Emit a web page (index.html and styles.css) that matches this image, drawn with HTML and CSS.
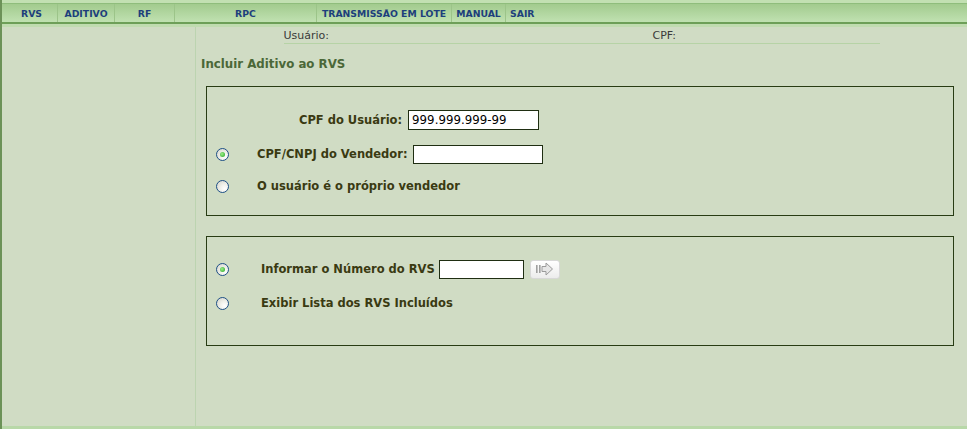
FILE: index.html
```html
<!DOCTYPE html>
<html lang="pt-BR">
<head>
<meta charset="utf-8">
<title>Incluir Aditivo ao RVS</title>
<link rel="stylesheet" href="styles.css">
</head>
<body>
<div class="page">
  <div class="top-strip"></div>
  <nav class="menubar">
    <a class="menu-item w-rvs">RVS</a>
    <a class="menu-item w-aditivo">ADITIVO</a>
    <a class="menu-item w-rf">RF</a>
    <a class="menu-item w-rpc">RPC</a>
    <a class="menu-item w-trans">TRANSMISSÃO EM LOTE</a>
    <a class="menu-item w-manual">MANUAL</a>
    <a class="menu-item w-sair">SAIR</a>
  </nav>
  <div class="under-strip"></div>
  <div class="main">
    <aside class="sidebar"></aside>
    <section class="content">
      <div class="info-row">
        <span class="info-user">Usuário:</span>
        <span class="info-cpf">CPF:</span>
      </div>
      <h1 class="title">Incluir Aditivo ao RVS</h1>

      <div class="box box-one">
        <div class="row row-user">
          <label class="label">CPF do Usuário:</label>
          <input class="field field-user" type="text" value="999.999.999-99">
        </div>
        <div class="row row-radio">
          <input class="radio" type="radio" name="vend" checked>
          <label class="label">CPF/CNPJ do Vendedor:</label>
          <input class="field field-vend" type="text">
        </div>
        <div class="row row-radio">
          <input class="radio" type="radio" name="vend">
          <label class="label">O usuário é o próprio vendedor</label>
        </div>
      </div>

      <div class="box box-two">
        <div class="row row-radio2">
          <input class="radio" type="radio" name="rvs" checked>
          <label class="label">Informar o Número do RVS</label>
          <input class="field field-rvs" type="text">
          <button class="go-btn" type="button" aria-label="Ir">
            <svg width="19" height="14" viewBox="0 0 19 14">
              <rect x="1" y="3" width="1.6" height="8" fill="#a0a0a0"/>
              <rect x="4" y="3" width="1.6" height="8" fill="#a0a0a0"/>
              <path d="M7 4.5 H11 V1 L17.5 7 L11 13 V9.5 H7 Z" fill="#e6e6e6" stroke="#9a9a9a" stroke-width="1"/>
            </svg>
          </button>
        </div>
        <div class="row row-radio2">
          <input class="radio" type="radio" name="rvs">
          <label class="label">Exibir Lista dos RVS Incluídos</label>
        </div>
      </div>
    </section>
  </div>
  <div class="bottom-strip"></div>
</div>
</body>
</html>
```

FILE: styles.css
```css
html, body {
  margin: 0;
  padding: 0;
}
body {
  background: #d0dcc4;
  font-family: "DejaVu Sans", Verdana, sans-serif;
  font-size: 11px;
  color: #3a3a12;
}
.page {
  height: 429px;
  display: flex;
  flex-direction: column;
  border-left: 2px solid #6c9258;
  box-sizing: border-box;
}
.top-strip {
  height: 3px;
  background: #c2e0b2;
}
.menubar {
  height: 18px;
  display: flex;
  align-items: stretch;
  background: linear-gradient(#a2cb8e, #c0e1b1);
  border-top: 1px solid #8fbd7c;
  border-bottom: 2px solid #6d9f58;
}
.menu-item {
  display: flex;
  align-items: center;
  justify-content: center;
  font-size: 9.3px;
  font-weight: bold;
  color: #1d3f7c;
  border-right: 1px solid #9cc489;
  white-space: nowrap;
  box-sizing: border-box;
}
.w-rvs { width: 56px; padding-left: 4px; }
.w-aditivo { width: 57px; }
.w-rf { width: 60px; }
.w-rpc { width: 142px; }
.w-trans { width: 135px; }
.w-manual { width: 54px; }
.w-sair { width: 40px; border-right: none; justify-content: flex-start; padding-left: 4px; }
.under-strip {
  height: 3px;
  background: #c0dcb0;
}
.main {
  flex: 1;
  display: flex;
}
.sidebar {
  width: 193px;
  border-right: 1px solid #bcd4b0;
}
.content {
  flex: 1;
}
.info-row {
  width: 596px;
  margin: 0 auto;
  height: 16px;
  display: flex;
  align-items: center;
  border-bottom: 1px solid #b6d3a6;
  font-size: 11px;
  color: #3a3a3a;
}
.info-user { width: 369px; }
.title {
  margin: 0;
  padding: 13px 0 0 5px;
  height: 18px;
  font-size: 11.8px;
  font-weight: bold;
  color: #4b6838;
}
.box {
  margin: 11px 13px 0 10px;
  border: 1.5px solid #283c14;
  box-sizing: border-box;
}
.box-one {
  height: 130px;
  padding-top: 22px;
}
.box-two {
  height: 110px;
  margin-top: 20px;
  padding-top: 21px;
}
.row {
  display: flex;
  align-items: center;
}
.label {
  font-weight: bold;
  font-size: 11.5px;
  color: #3a3a12;
  white-space: nowrap;
}
.row-user {
  height: 22px;
  padding-left: 92px;
  margin-bottom: 13px;
}
.row-radio {
  height: 20px;
  margin-bottom: 12px;
  padding-left: 9px;
}
.row-radio2 {
  height: 22px;
  margin-bottom: 12px;
  padding-left: 9px;
}
.row-radio .label { margin-left: 28px; }
.row-radio2 .label { margin-left: 32px; }
.field {
  height: 20px;
  box-sizing: border-box;
  border: 1px solid #1f2e12;
  background: #fff;
  font-family: "DejaVu Sans", Verdana, sans-serif;
  font-size: 11.8px;
  color: #000;
  padding: 0 3px;
  margin: 0;
}
.field-user { width: 131px; margin-left: 6px; }
.field-vend { width: 130px; height: 19px; margin-left: 5px; }
.field-rvs { width: 85px; height: 19px; margin-left: 4px; }
.radio {
  appearance: none;
  -webkit-appearance: none;
  width: 13px;
  height: 13px;
  margin: 0;
  border-radius: 50%;
  border: 1px solid #1d4f86;
  background: radial-gradient(circle at 70% 70%, #ffffff 0%, #f0f0ea 40%, #d2d2c8 100%);
  box-sizing: border-box;
  position: relative;
}
.radio:checked::after {
  content: "";
  position: absolute;
  left: 3px;
  top: 3px;
  width: 5px;
  height: 5px;
  border-radius: 50%;
  background: radial-gradient(circle at 40% 40%, #9ef08a, #21a121);
}
.go-btn {
  margin-left: 6px;
  width: 30px;
  height: 19px;
  padding: 0;
  border: 1px solid #d8d8d8;
  border-radius: 3px;
  background: linear-gradient(#ffffff, #ececec);
  display: flex;
  align-items: center;
  justify-content: center;
}
.bottom-strip {
  height: 3px;
  background: #b8d8a8;
}
```
